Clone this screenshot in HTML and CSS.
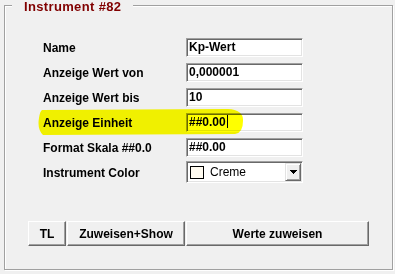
FILE: index.html
```html
<html lang="de">
<head>
    <meta charset="UTF-8">
    <meta name="viewport" content="width=device-width, initial-scale=1.0">
    <title>Instrument #82</title>

    <link rel="stylesheet" href="styles.css">

</head>
<body>

    <div class="group">
        <div class="group-title">Instrument #82</div>

        <div class="form">
            <span class="label">Name</span>
            <div class="field">Kp-Wert</div>

            <span class="label">Anzeige Wert von</span>
            <div class="field">0,000001</div>

            <span class="label">Anzeige Wert bis</span>
            <div class="field">10</div>

            <span class="label">Anzeige Einheit</span>
            <div class="field">##0.00<span class="caret"></span></div>

            <span class="label">Format Skala ##0.0</span>
            <div class="field">##0.00</div>

            <span class="label">Instrument Color</span>
            <div class="combo">
                <span class="swatch"></span>
                <span class="combo-text">Creme</span>
                <span class="combo-btn">
                    <svg width="7" height="4" viewBox="0 0 7 4" shape-rendering="crispEdges">
                        <rect x="0" y="0" width="7" height="1" fill="#000"/>
                        <rect x="1" y="1" width="5" height="1" fill="#000"/>
                        <rect x="2" y="2" width="3" height="1" fill="#000"/>
                        <rect x="3" y="3" width="1" height="1" fill="#000"/>
                    </svg>
                </span>
            </div>
        </div>

        <div class="buttons">
            <button class="btn btn-tl">TL</button>
            <button class="btn btn-show">Zuweisen+Show</button>
            <button class="btn btn-assign">Werte zuweisen</button>
        </div>
    </div>

    <!-- marker stroke drawn over the screenshot -->
    <svg class="highlight" width="395" height="274" viewBox="0 0 395 274">
        <path d="M42,110 L228,109 Q244,110 243,121 Q243,133 235,134 L43,135 Q37,129 39,118 Q40,111 42,110 Z" fill="#ffff00"/>
    </svg>

</body>
</html>
```

FILE: styles.css
```css
*{
    margin:0;
    padding:0;
}

body{
    background-color:#f0f0f0;
    font-family:"Liberation Sans", Arial, sans-serif;
    color:#000;
}

.group{
    box-sizing:border-box;
    width:389px;
    height:265px;
    margin:5px 0 0 4px;
    border:1px solid #a0a0a0;
    box-shadow:inset 1px 1px 0 #fff, 1px 1px 0 #fff;
}

.group-title{
    width:fit-content;
    margin:-6px 0 0 7px;
    padding:0 12px;
    background-color:#f0f0f0;
    color:#800000;
    font-size:13px;
    font-weight:bold;
    line-height:14px;
    letter-spacing:0.35px;
}

.form{
    display:grid;
    grid-template-columns:143px 117px;
    grid-auto-rows:19px;
    row-gap:6px;
    margin:24px 0 0 38px;
}

.label{
    align-self:center;
    font-size:12px;
    font-weight:bold;
    white-space:nowrap;
}

.field,
.combo{
    box-sizing:border-box;
    border:1px solid;
    border-color:#a0a0a0 #fff #fff #a0a0a0;
    box-shadow:inset 1px 1px 0 #696969, inset -1px -1px 0 #e3e3e3;
    background-color:#fff;
}

.field{
    padding:0 2px;
    font-size:12px;
    font-weight:bold;
    line-height:17px;
    white-space:nowrap;
}

.caret{
    display:inline-block;
    width:1px;
    height:13px;
    margin-left:1px;
    background-color:#000;
    vertical-align:-2px;
}

.combo{
    display:flex;
    align-items:center;
    height:22px;
    margin-top:-2px;
    padding:1px;
}

.swatch{
    box-sizing:border-box;
    width:14px;
    height:13px;
    margin:0 6px 0 2px;
    border:1px solid #000;
    background-color:#fffbf0;
}

.combo-text{
    font-size:12px;
}

.combo-btn{
    box-sizing:border-box;
    display:flex;
    align-items:center;
    justify-content:center;
    width:16px;
    height:18px;
    margin-left:auto;
    border:1px solid;
    border-color:#e3e3e3 #696969 #696969 #e3e3e3;
    box-shadow:inset 1px 1px 0 #fff, inset -1px -1px 0 #a0a0a0;
    background-color:#f0f0f0;
}

.buttons{
    display:flex;
    gap:1px;
    margin:39px 0 0 23px;
}

.btn{
    box-sizing:border-box;
    height:25px;
    border:1px solid;
    border-color:#fff #696969 #696969 #fff;
    box-shadow:inset -1px -1px 0 #a0a0a0;
    background-color:#f0f0f0;
    font-family:"Liberation Sans", Arial, sans-serif;
    font-size:12px;
    font-weight:bold;
    color:#000;
}

.btn-tl{
    width:38px;
}

.btn-show{
    width:118px;
}

.btn-assign{
    width:183px;
}

.highlight{
    position:absolute;
    top:0;
    left:0;
    pointer-events:none;
    mix-blend-mode:multiply;
}
```
